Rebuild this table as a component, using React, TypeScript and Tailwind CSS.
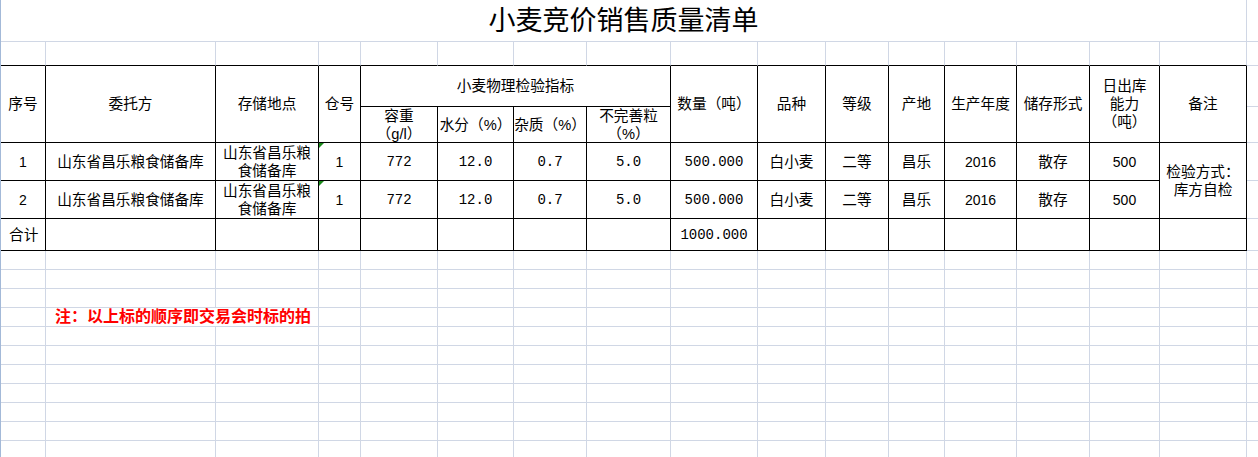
import React from 'react';

// Cell borders: light sheet gridlines vs. the black ruled table.
const GRID = 'border-r border-b border-[#d0d7e5]';
const TABLE = 'border-r border-b border-black';
const EDGE = 'border-r border-b border-[#d0d7e5] border-b-black';
const MONO = "font-['Liberation_Mono',monospace] text-[14px]";
const NUM = "font-['Liberation_Sans',sans-serif] text-[14px]";

function Cell({ className = '', children }: { className?: string; children?: React.ReactNode }) {
  return (
    <div className={`flex items-center justify-center text-center ${className}`}>{children}</div>
  );
}

/** Little green "number stored as text" marker in a cell's top-left corner. */
function TextFlag() {
  return (
    <span className="absolute left-0 top-0 h-0 w-0 border-r-[5px] border-t-[5px] border-r-transparent border-t-[#1a8a1a]" />
  );
}

const records = [
  { no: '1', wh: '1', weight: '772', water: '12.0', impurity: '0.7', broken: '5.0', qty: '500.000' },
  { no: '2', wh: '1', weight: '772', water: '12.0', impurity: '0.7', broken: '5.0', qty: '500.000' },
];

export default function App() {
  return (
    <div className="h-[457px] w-full overflow-hidden border-l border-[#a3b9d8] bg-white font-['Liberation_Sans','Noto_Sans_CJK_SC',sans-serif] text-[14.67px] leading-[18px] text-black">
      <div className="grid grid-cols-[45px_170px_103px_42px_77px_76px_73px_84px_87px_68px_63px_56px_72px_73px_70px_87px_120px] grid-rows-[42px_24px_41px_36px_38px_38px_32px] auto-rows-[19px]">
        {/* title */}
        <Cell className={`col-span-16 text-[27px] ${GRID}`}>小麦竞价销售质量清单</Cell>
        <Cell className={GRID} />

        {/* blank row above the table */}
        {Array.from({ length: 16 }).map((_, i) => (
          <Cell key={`e${i}`} className={EDGE} />
        ))}
        <Cell className={GRID} />

        {/* header */}
        <Cell className={`row-span-2 ${TABLE}`}>序号</Cell>
        <Cell className={`row-span-2 ${TABLE}`}>委托方</Cell>
        <Cell className={`row-span-2 ${TABLE}`}>存储地点</Cell>
        <Cell className={`row-span-2 ${TABLE}`}>仓号</Cell>
        <Cell className={`col-span-4 ${TABLE}`}>小麦物理检验指标</Cell>
        <Cell className={`row-span-2 ${TABLE}`}>数量（吨）</Cell>
        <Cell className={`row-span-2 ${TABLE}`}>品种</Cell>
        <Cell className={`row-span-2 ${TABLE}`}>等级</Cell>
        <Cell className={`row-span-2 ${TABLE}`}>产地</Cell>
        <Cell className={`row-span-2 ${TABLE}`}>生产年度</Cell>
        <Cell className={`row-span-2 ${TABLE}`}>储存形式</Cell>
        <Cell className={`row-span-2 ${TABLE}`}>
          日出库
          <br />
          能力
          <br />
          （吨）
        </Cell>
        <Cell className={`row-span-2 ${TABLE}`}>备注</Cell>
        <Cell className={GRID} />

        <Cell className={TABLE}>
          容重
          <br />
          （g/l）
        </Cell>
        <Cell className={TABLE}>水分（%）</Cell>
        <Cell className={TABLE}>杂质（%）</Cell>
        <Cell className={TABLE}>
          不完善粒
          <br />
          （%）
        </Cell>
        <Cell className={GRID} />

        {/* data rows */}
        {records.map((r, i) => (
          <React.Fragment key={r.no}>
            <Cell className={`${NUM} ${TABLE}`}>{r.no}</Cell>
            <Cell className={TABLE}>山东省昌乐粮食储备库</Cell>
            <Cell className={TABLE}>
              山东省昌乐粮
              <br />
              食储备库
            </Cell>
            <Cell className={`relative ${NUM} ${TABLE}`}>
              <TextFlag />
              {r.wh}
            </Cell>
            <Cell className={`${MONO} ${TABLE}`}>{r.weight}</Cell>
            <Cell className={`${MONO} ${TABLE}`}>{r.water}</Cell>
            <Cell className={`${MONO} ${TABLE}`}>{r.impurity}</Cell>
            <Cell className={`${MONO} ${TABLE}`}>{r.broken}</Cell>
            <Cell className={`${MONO} ${TABLE}`}>{r.qty}</Cell>
            <Cell className={TABLE}>白小麦</Cell>
            <Cell className={TABLE}>二等</Cell>
            <Cell className={TABLE}>昌乐</Cell>
            <Cell className={`${NUM} ${TABLE}`}>2016</Cell>
            <Cell className={TABLE}>散存</Cell>
            <Cell className={`${NUM} ${TABLE}`}>500</Cell>
            {i === 0 ? (
              <Cell className={`row-span-2 ${TABLE}`}>
                检验方式：
                <br />
                库方自检
              </Cell>
            ) : null}
            <Cell className={GRID} />
          </React.Fragment>
        ))}

        {/* total */}
        <Cell className={`justify-start pl-2 ${TABLE}`}>合计</Cell>
        {Array.from({ length: 7 }).map((_, i) => (
          <Cell key={`t${i}`} className={TABLE} />
        ))}
        <Cell className={`${MONO} ${TABLE}`}>1000.000</Cell>
        {Array.from({ length: 7 }).map((_, i) => (
          <Cell key={`u${i}`} className={TABLE} />
        ))}
        <Cell className={GRID} />

        {/* empty sheet rows below */}
        {Array.from({ length: 11 }).map((_, row) =>
          row === 3 ? (
            <React.Fragment key={`r${row}`}>
              <Cell className={GRID} />
              <Cell className={`col-span-2 justify-start whitespace-nowrap pl-[9px] text-[16px] font-bold text-[#ff0000] ${GRID}`}>
                注：以上标的顺序即交易会时标的拍
              </Cell>
              {Array.from({ length: 14 }).map((_, i) => (
                <Cell key={`n${i}`} className={GRID} />
              ))}
            </React.Fragment>
          ) : (
            <React.Fragment key={`r${row}`}>
              {Array.from({ length: 17 }).map((_, i) => (
                <Cell key={`g${i}`} className={GRID} />
              ))}
            </React.Fragment>
          ),
        )}
      </div>
    </div>
  );
}
